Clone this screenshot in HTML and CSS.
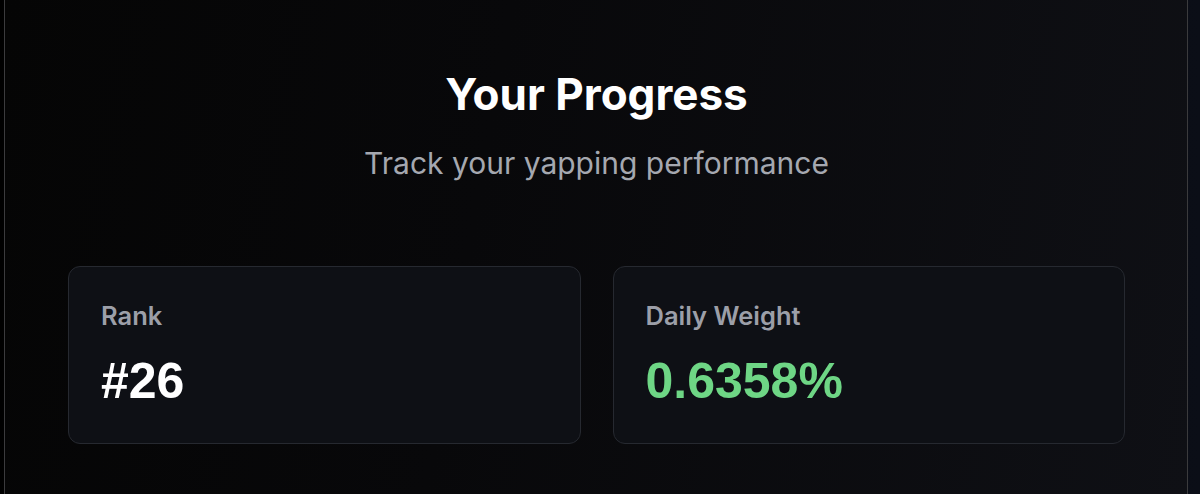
FILE: index.html
```html
<!DOCTYPE html>
<html lang="en">
<head>
    <meta charset="UTF-8">
    <meta name="viewport" content="width=device-width, initial-scale=1.0">
    <title>Your Progress</title>
    <link rel="stylesheet" href="styles.css">
</head>
<body>
    <div class="panel">
        <h2 class="title">Your Progress</h2>
        <p class="subtitle">Track your yapping performance</p>

        <div class="stats">
            <div class="stat-card">
                <div class="stat-label">Rank</div>
                <div class="stat-value">#26</div>
            </div>
            <div class="stat-card">
                <div class="stat-label">Daily Weight</div>
                <div class="stat-value green">0.6358%</div>
            </div>
        </div>
    </div>
</body>
</html>
```

FILE: styles.css
```css
body {
    font-family: Inter, "Liberation Sans", Arial, sans-serif;
    margin: 0;
    background: linear-gradient(90deg, #000 0%, #050608 50%, #0b0e17 100%);
    color: #fff;
    overflow: hidden;
}
.panel {
    box-sizing: border-box;
    width: 1184px;
    min-height: 494px;
    margin-left: 4px;
    padding: 68px 62px 0 63px;
    border-left: 1px solid #3b3b3d;
    border-right: 1px solid #3b3b3d;
    background: linear-gradient(100deg, #050505 0%, #08080a 40%, #0f1015 100%); /* dark fade to the right */
}
.title {
    margin: 0;
    text-align: center;
    font-size: 44px;
    line-height: 52px;
    font-weight: 700;
    color: #fff;
}
.subtitle {
    margin: 25px 0 0;
    text-align: center;
    font-size: 30px;
    line-height: 36px;
    color: #a5a8b0;
}
.stats {
    display: grid;
    grid-template-columns: 1fr 1fr;
    gap: 32px;
    margin-top: 85px;
}
.stat-card {
    height: 178px;
    box-sizing: border-box;
    padding: 33px 32px;
    border: 1px solid #262930;
    border-radius: 12px;
    background-color: #0e1015;
}
.stat-label {
    font-size: 25.5px;
    line-height: 32px;
    font-weight: 600;
    color: #9c9fa8;
}
.stat-value {
    margin-top: 24px;
    font-family: "Liberation Sans", Arial, sans-serif;
    font-size: 50px;
    line-height: 50px;
    font-weight: 700;
    color: #fff;
}
.stat-value.green {
    color: #6ed685; /* positive metric */
}
```
